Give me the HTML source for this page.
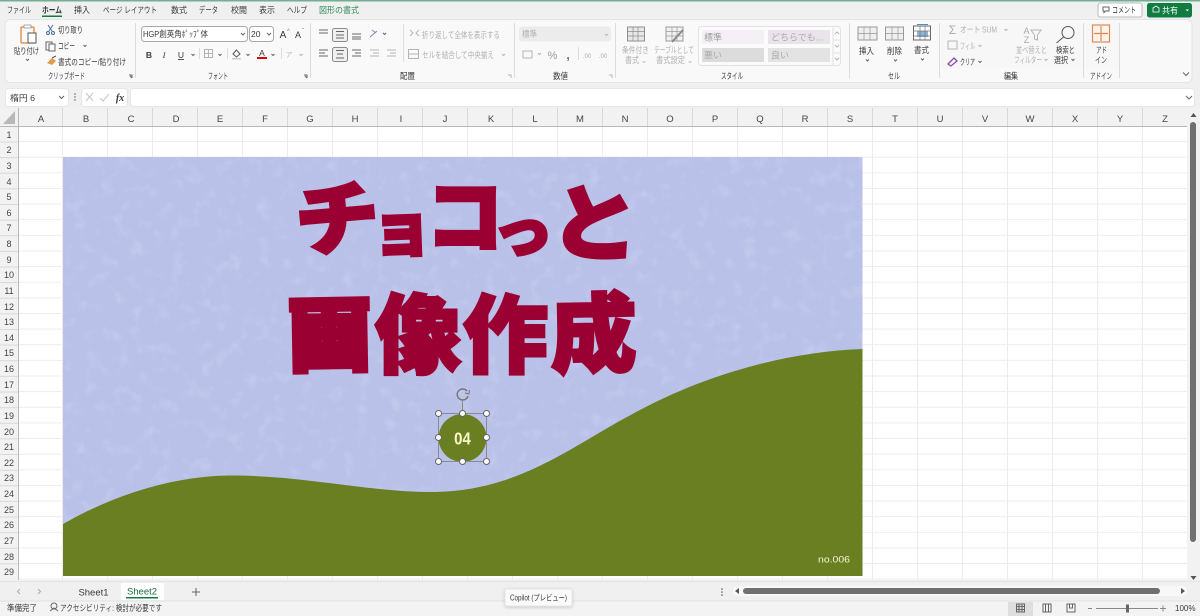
<!DOCTYPE html>
<html lang="ja"><head><meta charset="utf-8"><title>Excel</title>
<style>
html,body{margin:0;padding:0;width:1200px;height:616px;overflow:hidden;background:#f3f3f3}
svg{display:block;position:absolute;left:0;top:0}
text{font-family:"Liberation Sans","Noto Sans CJK JP",sans-serif;font-size:8.5px;fill:#3a3a3a}
.c{text-anchor:middle}
.g{fill:#b0b0b0}
.h text{font-size:9.5px;fill:#444;text-anchor:middle}
.r text{font-size:9px;fill:#444;text-anchor:middle}
.big text{font-family:"Noto Sans CJK JP",sans-serif;font-weight:900;fill:#9b0033;stroke:#9b0033;stroke-width:3px;stroke-linejoin:miter}
.ic{fill:none;stroke:#666;stroke-width:1}
.icg{fill:none;stroke:#b5b5b5;stroke-width:1}
</style></head><body>
<svg width="1200" height="616" viewBox="0 0 1200 616" xmlns="http://www.w3.org/2000/svg">
<defs>
<pattern id="grid" x="18" y="126.4" width="45" height="15.63" patternUnits="userSpaceOnUse">
<path d="M44.5 0V15.63M0 15.1H45" fill="none" stroke="#ececec" stroke-width="1"/>
</pattern>
<filter id="blot" x="0" y="0" width="100%" height="100%">
<feTurbulence type="fractalNoise" baseFrequency="0.07" numOctaves="3" seed="7"/>
<feColorMatrix type="matrix" values="0 0 0 0 0.80  0 0 0 0 0.80  0 0 0 0 0.94  0 0 0 2.2 -1.15"/>
</filter>
<filter id="sh" x="-20%" y="-40%" width="140%" height="190%"><feDropShadow dx="0" dy="1" stdDeviation="1.500" flood-color="#000" flood-opacity=".18"/></filter>
</defs>

<!-- chrome backgrounds -->
<rect width="1200" height="616" fill="#f0f0f0"/>
<rect width="1200" height="1.5" fill="#6fb093"/>
<rect x="5" y="19.5" width="1187" height="63" rx="5" fill="#f9f9f9" stroke="#e4e4e4"/>

<!-- tabs -->
<g>
<text x="7" y="13" textLength="24" lengthAdjust="spacingAndGlyphs">ファイル</text>
<text x="42" y="13" textLength="20" lengthAdjust="spacingAndGlyphs" style="font-weight:bold">ホーム</text>
<rect x="42" y="15.500" width="20" height="1.500" fill="#107c41"/>
<text x="74" y="13" textLength="16" lengthAdjust="spacingAndGlyphs">挿入</text>
<text x="103" y="13" textLength="54" lengthAdjust="spacingAndGlyphs">ページ レイアウト</text>
<text x="171" y="13" textLength="16" lengthAdjust="spacingAndGlyphs">数式</text>
<text x="199" y="13" textLength="19" lengthAdjust="spacingAndGlyphs">データ</text>
<text x="231" y="13" textLength="16" lengthAdjust="spacingAndGlyphs">校閲</text>
<text x="259" y="13" textLength="16" lengthAdjust="spacingAndGlyphs">表示</text>
<text x="287" y="13" textLength="20" lengthAdjust="spacingAndGlyphs">ヘルプ</text>
<text x="319" y="13" textLength="40" lengthAdjust="spacingAndGlyphs" style="fill:#2f8a5a">図形の書式</text>
</g>

<!-- share buttons -->
<rect x="1098" y="3" width="44" height="14" rx="2.500" fill="#fff" stroke="#bbb"/>
<path d="M1103 7h6v4h-3.500l-1.500 1.500V11h-1z" class="ic"/>
<text x="1112" y="13" textLength="24" lengthAdjust="spacingAndGlyphs">コメント</text>
<rect x="1147" y="3" width="45" height="14.500" rx="2.500" fill="#107c41"/>
<path d="M1153 8l3-2 3 2v4h-6z" fill="none" stroke="#fff" stroke-width=".8"/>
<text x="1162" y="13.500" textLength="16" lengthAdjust="spacingAndGlyphs" style="fill:#fff">共有</text>
<path d="M1185.500 9.500l1.800 1.800 1.800-1.800z" fill="#fff"/>

<!-- ribbon separators -->
<path d="M135.500 23V78M310.500 23V78M514.500 23V78M615.500 23V78M849.500 23V78M939.500 23V78M1083.500 23V78M1119.500 23V78" stroke="#dcdcdc"/>

<!-- clipboard -->
<rect x="21" y="27" width="13" height="16" rx="1" fill="none" stroke="#d9893a" stroke-width="1.300"/>
<rect x="24" y="25" width="7" height="3" fill="#fff" stroke="#888" stroke-width=".7"/>
<rect x="28" y="33" width="8" height="10" fill="#fff" stroke="#555"/>
<text x="14" y="54" textLength="25" lengthAdjust="spacingAndGlyphs">貼り付け</text>
<path d="M26 59l1.500 1.500 1.500-1.500" class="ic"/>
<path d="M48 25l4 6M53 25l-4 6" stroke="#4a6d9c" fill="none"/><circle cx="48" cy="33" r="1.500" fill="none" stroke="#4a6d9c"/><circle cx="53" cy="33" r="1.500" fill="none" stroke="#4a6d9c"/>
<text x="58" y="33" textLength="25" lengthAdjust="spacingAndGlyphs">切り取り</text>
<rect x="46" y="42" width="6" height="8" fill="none" stroke="#666"/><rect x="49" y="44" width="6" height="7" fill="#f9f9f9" stroke="#666"/>
<text x="58" y="49" textLength="17" lengthAdjust="spacingAndGlyphs">コピー</text>
<path d="M83.500 45l1.500 1.500 1.500-1.500" class="ic"/>
<path d="M47 63l5-5 4 3-4 4z" fill="#e29a4a"/><path d="M52 58l4-2" stroke="#555"/>
<text x="58" y="65" textLength="68" lengthAdjust="spacingAndGlyphs">書式のコピー/貼り付け</text>
<text x="48" y="79" textLength="37" lengthAdjust="spacingAndGlyphs">クリップボード</text>
<path d="M129 75h3v3M130 76l2 2" class="ic" stroke-width=".7"/>

<!-- font -->
<rect x="141.500" y="26.500" width="106" height="15" rx="3" fill="#fff" stroke="#a8a8a8"/>
<text x="143" y="37" textLength="65" lengthAdjust="spacingAndGlyphs">HGP創英角ﾎﾟｯﾌﾟ体</text>
<path d="M241 33l2 2 2-2" class="ic"/>
<rect x="249.500" y="26.500" width="24" height="15" rx="3" fill="#fff" stroke="#a8a8a8"/>
<text x="251" y="37" style="font-size:8.500px">20</text>
<path d="M267 33l2 2 2-2" class="ic"/>
<text x="283" y="38" class="c" style="font-size:10px">A</text><text x="287" y="33" style="font-size:6px;fill:#4a7ab5">^</text>
<text x="298" y="38" class="c" style="font-size:9px">A</text><text x="302" y="33" style="font-size:6px;fill:#4a7ab5">ˇ</text>
<text x="149" y="58" class="c" style="font-size:8.500px;font-weight:bold">B</text>
<text x="164" y="58" class="c" style="font-size:8.500px;font-style:italic;font-family:'Liberation Serif',serif">I</text>
<text x="181" y="58" class="c" style="font-size:8.500px;text-decoration:underline">U</text>
<path d="M191.500 54l1.500 1.500 1.500-1.500" class="ic"/>
<path d="M199.500 48v11M227.500 48v11M281.500 48v11" stroke="#ddd"/>
<rect x="204.500" y="49.500" width="8" height="8" class="icg"/><path d="M208.500 49.500v8M204.500 53.500h8" class="icg"/>
<path d="M218.500 54l1.500 1.500 1.500-1.500" class="ic"/>
<path d="M233 54l3.500-4 3.500 4-3.500 3z" fill="none" stroke="#555"/><rect x="232" y="58" width="9" height="1.500" fill="#ccc"/>
<path d="M246.500 54l1.500 1.500 1.500-1.500" class="ic"/>
<text x="262" y="56" class="c" style="font-size:8.500px">A</text><rect x="257" y="57" width="10" height="2" fill="#e00000"/>
<path d="M271.500 54l1.500 1.500 1.500-1.500" class="ic"/>
<text x="289" y="57" class="c" style="font-size:7px;fill:#bbb">ア</text>
<path d="M299.500 54l1.500 1.500 1.500-1.500" class="icg"/>
<text x="208" y="79" textLength="20" lengthAdjust="spacingAndGlyphs">フォント</text>
<path d="M304 75h3v3M305 76l2 2" class="ic" stroke-width=".7"/>

<!-- alignment -->
<path d="M319 30h9M319 33h9" class="ic"/>
<rect x="332.500" y="28.500" width="15" height="13" rx="2" fill="#f0f0f0" stroke="#8a8a8a"/>
<path d="M336 31.500h8M336 35h8M336 38h8" class="ic"/>
<path d="M352 34h9M352 37h9M352 39h9" class="ic"/>
<path d="M370 37l7-6M372 30l4 3" stroke="#7a8fc0" fill="none"/>
<path d="M383 33l1.500 1.500 1.500-1.500" class="ic"/>
<path d="M319 50h9M319 53h6M319 56h9" class="ic"/>
<rect x="332.500" y="47.500" width="15" height="14" rx="2" fill="#f0f0f0" stroke="#8a8a8a"/>
<path d="M336 50.500h8M337 54h6M336 58h8" class="ic"/>
<path d="M352 50h9M355 53h6M352 56h9" class="ic"/>
<path d="M403.500 24v38" stroke="#ddd"/>
<path d="M370 50h9M373 53h6M370 56h9M387 50h9M390 53h6M387 56h9" class="icg"/>
<text x="422" y="38" textLength="78" lengthAdjust="spacingAndGlyphs" class="g">折り返して全体を表示する</text>
<text x="422" y="58" textLength="72" lengthAdjust="spacingAndGlyphs" class="g">セルを結合して中央揃え</text>
<path d="M410 30l3 3-3 3M419 30l-3 3 3 3" class="icg"/>
<rect x="408.500" y="49.500" width="10" height="9" class="icg"/><path d="M408.500 54h10" class="icg"/>
<path d="M502 54l1.500 1.500 1.500-1.500" class="icg"/>
<text x="400" y="79" textLength="15" lengthAdjust="spacingAndGlyphs">配置</text>
<path d="M508 75h3v3" class="icg"/>

<!-- number -->
<rect x="519" y="26.500" width="92" height="15" rx="3" fill="#ececec"/>
<text x="522" y="37" textLength="15" lengthAdjust="spacingAndGlyphs" class="g">標準</text>
<path d="M605 34l1.500 1.500 1.500-1.500" class="icg"/>
<rect x="523" y="51" width="9" height="7" class="icg"/>
<path d="M538 53l1.500 1.500 1.500-1.500" class="icg"/>
<text x="552.500" y="59" class="c" style="font-size:11px;fill:#9a9a9a">%</text>
<text x="568" y="59" class="c" style="font-size:13px;fill:#777;font-weight:bold">,</text>
<path d="M578.500 47v13" stroke="#ddd"/>
<text x="587" y="58" class="c" style="font-size:6px;fill:#aaa">.00</text>
<text x="603" y="58" class="c" style="font-size:6px;fill:#aaa">.00</text>
<text x="553" y="79" textLength="15" lengthAdjust="spacingAndGlyphs">数値</text>
<path d="M609 75h3v3" class="icg"/>

<!-- style -->
<rect x="627.500" y="27" width="17" height="14" fill="#e8e8e8" stroke="#8f8f8f"/>
<path d="M628 31.500h16M628 36h16M633 27v14M638 27v14" stroke="#8f8f8f" fill="none" stroke-width=".7"/>
<rect x="666" y="27" width="17" height="14" fill="#f2f2f2" stroke="#9a9a9a"/>
<path d="M666 31.500h17M666 36h17M672 27v14M677 27v14" stroke="#9a9a9a" fill="none" stroke-width=".7"/>
<path d="M672 42l11-12" stroke="#888" stroke-width="2"/>
<text x="622" y="53" textLength="27" lengthAdjust="spacingAndGlyphs" class="g">条件付き</text>
<text x="625" y="63" textLength="22" lengthAdjust="spacingAndGlyphs" class="g">書式 ⌄</text>
<text x="654" y="53" textLength="40" lengthAdjust="spacingAndGlyphs" class="g">テーブルとして</text>
<text x="656" y="63" textLength="37" lengthAdjust="spacingAndGlyphs" class="g">書式設定 ⌄</text>
<rect x="698.500" y="26.500" width="142" height="39" rx="3" fill="#fbfbfb" stroke="#e2e2e2"/>
<rect x="702" y="30" width="62" height="14" fill="#f5f0f5"/>
<text x="704" y="40.500" style="font-size:9px;fill:#999">標準</text>
<rect x="768" y="30" width="62" height="14" fill="#e9e4ea"/>
<text x="771" y="40.500" style="font-size:9px;fill:#aaa">どちらでも...</text>
<rect x="702" y="48" width="62" height="14" fill="#dcdcdc"/>
<text x="704" y="58.500" style="font-size:9px;fill:#aaa">悪い</text>
<rect x="768" y="48" width="62" height="14" fill="#e3e3e3"/>
<text x="771" y="58.500" style="font-size:9px;fill:#aaa">良い</text>
<path d="M833 27.500v38M833 40h8M833 53h8" stroke="#e2e2e2" fill="none"/>
<path d="M835 34l2-2 2 2M835 45l2 2 2-2M835 58l2 2 2-2" class="icg"/>
<text x="721" y="79" textLength="22" lengthAdjust="spacingAndGlyphs">スタイル</text>

<!-- cells -->
<rect x="858" y="27" width="19" height="13" fill="#efefef" stroke="#999"/><path d="M858 33.500h19M864 27v13M870 27v13" stroke="#999" fill="none" stroke-width=".7"/>
<rect x="885.500" y="27" width="18" height="13" fill="#efefef" stroke="#999"/><path d="M886 33.500h17M892 27v13M898 27v13" stroke="#999" fill="none" stroke-width=".7"/>
<rect x="913.500" y="26" width="17" height="14" fill="#fff" stroke="#666"/><rect x="917" y="31" width="11" height="6" fill="#8fb3dc"/><path d="M914 31h17M914 36h17M920 26v14M925 26v14" stroke="#777" fill="none" stroke-width=".7"/><path d="M917 24.500h11" stroke="#4a8fd0"/>
<text x="859" y="54" textLength="15" lengthAdjust="spacingAndGlyphs">挿入</text><text x="887" y="54" textLength="15" lengthAdjust="spacingAndGlyphs">削除</text><text x="914" y="53" textLength="15" lengthAdjust="spacingAndGlyphs">書式</text>
<path d="M866 59.500l1.500 1.500 1.500-1.500M894 59.500l1.500 1.500 1.500-1.500M921 58.500l1.500 1.500 1.500-1.500" class="ic"/>
<text x="888" y="79" textLength="12" lengthAdjust="spacingAndGlyphs">セル</text>

<!-- edit -->
<rect x="941" y="22" width="140" height="46" fill="#f7f7f7"/>
<text x="952.500" y="34" class="c" style="font-size:12px;fill:#aaa">Σ</text>
<text x="960" y="32.500" textLength="37" lengthAdjust="spacingAndGlyphs" class="g">オート SUM</text>
<path d="M1004.500 29l1.500 1.500 1.500-1.500" class="icg"/>
<rect x="948" y="41" width="9" height="8" class="icg"/>
<text x="960" y="49" textLength="15" lengthAdjust="spacingAndGlyphs" class="g">フィル</text>
<path d="M978.500 45l1.500 1.500 1.500-1.500" class="icg"/>
<path d="M948 64l6-6 3 3-6 5z" fill="none" stroke="#8a4ab0" stroke-width="1.300"/>
<text x="960" y="65" textLength="15" lengthAdjust="spacingAndGlyphs">クリア</text>
<path d="M978.500 61l1.500 1.500 1.500-1.500" class="ic"/>
<text x="1026.500" y="34" class="c" style="font-size:9px;fill:#aaa">A</text>
<text x="1026.500" y="43" class="c" style="font-size:9px;fill:#aaa">Z</text>
<path d="M1031 30h10l-3.500 5v5l-3-1v-4z" class="icg"/>
<text x="1016" y="53" textLength="31" lengthAdjust="spacingAndGlyphs" class="g">並べ替えと</text>
<text x="1014" y="63" textLength="28" lengthAdjust="spacingAndGlyphs" class="g">フィルター</text>
<path d="M1044.500 59l1.500 1.500 1.500-1.500" class="icg"/>
<circle cx="1068" cy="32.500" r="6" fill="none" stroke="#555"/><path d="M1063.500 37l-7 6" stroke="#555"/>
<text x="1056" y="53" textLength="19" lengthAdjust="spacingAndGlyphs">検索と</text>
<text x="1054" y="63" textLength="14" lengthAdjust="spacingAndGlyphs">選択</text>
<path d="M1071.500 59l1.500 1.500 1.500-1.500" class="ic"/>
<text x="1004" y="79" textLength="14" lengthAdjust="spacingAndGlyphs">編集</text>

<!-- add-in -->
<rect x="1084" y="22" width="35" height="46" fill="#f7f7f7"/>
<rect x="1092.500" y="25" width="17" height="17" fill="#fdf3ea" stroke="#dd8a5a" stroke-width="1.200"/>
<path d="M1094 33.500h14M1101 26v15" stroke="#dd8a5a" stroke-width="1.200"/>
<text x="1096" y="53" textLength="11" lengthAdjust="spacingAndGlyphs">アド</text><text x="1095" y="63" textLength="12" lengthAdjust="spacingAndGlyphs">イン</text>
<text x="1090" y="79" textLength="22" lengthAdjust="spacingAndGlyphs">アドイン</text>
<path d="M1183 72.500l3 3 3-3" class="ic"/>

<!-- formula bar -->
<rect x="5.500" y="88.500" width="63" height="18" rx="3" fill="#fff" stroke="#e6e6e6"/>
<text x="10" y="101" textLength="25" lengthAdjust="spacingAndGlyphs">楕円 6</text>
<path d="M59 96l2.500 2.500 2.500-2.500" class="ic"/>
<circle cx="75" cy="94" r=".7" fill="#555"/><circle cx="75" cy="97" r=".7" fill="#555"/><circle cx="75" cy="100" r=".7" fill="#555"/>
<rect x="81.500" y="88.500" width="46" height="18" rx="3" fill="#fff" stroke="#e6e6e6"/>
<path d="M86 93l7 8M93 93l-7 8M100 98l3 3 6-7" fill="none" stroke="#c4c4c4"/>
<text x="120" y="101" class="c" style="font-family:'Liberation Serif',serif;font-style:italic;font-weight:bold;font-size:10px">fx</text>
<rect x="130.500" y="88.500" width="1064" height="18" rx="3" fill="#fff" stroke="#e6e6e6"/>
<path d="M1186 96l3 3 3-3" class="ic"/>

<!-- sheet grid -->
<rect x="18" y="126" width="1169" height="454" fill="#fff"/>
<rect x="18" y="126" width="1169" height="454" fill="url(#grid)"/>
<!-- headers -->
<rect x="0" y="108" width="1187" height="19" fill="#f2f2f2"/>
<rect x="0" y="126" width="18" height="454" fill="#f2f2f2"/>
<path d="M15 111v13H3z" fill="#b8b8b8"/>
<path d="M18.500 108V580M0 126.500H1187" stroke="#b8b8b8"/>
<path d="M62.500 108V126M107.500 108V126M152.500 108V126M197.500 108V126M242.500 108V126M287.500 108V126M332.500 108V126M377.500 108V126M422.500 108V126M467.500 108V126M512.500 108V126M557.500 108V126M602.500 108V126M647.500 108V126M692.500 108V126M737.500 108V126M782.500 108V126M827.500 108V126M872.500 108V126M917.500 108V126M962.500 108V126M1007.500 108V126M1052.500 108V126M1097.500 108V126M1142.500 108V126" stroke="#d8d8d8"/>
<path d="M0 142H18M0 157.600H18M0 173.200H18M0 188.900H18M0 204.500H18M0 220.100H18M0 235.700H18M0 251.400H18M0 267H18M0 282.600H18M0 298.300H18M0 313.900H18M0 329.500H18M0 345.100H18M0 360.800H18M0 376.400H18M0 392H18M0 407.700H18M0 423.300H18M0 438.900H18M0 454.500H18M0 470.200H18M0 485.800H18M0 501.400H18M0 517H18M0 532.700H18M0 548.300H18M0 563.900H18" stroke="#d8d8d8"/>
<g class="h">
<text x="41" y="122">A</text><text x="86" y="122">B</text><text x="131" y="122">C</text><text x="176" y="122">D</text><text x="220" y="122">E</text><text x="265" y="122">F</text><text x="310" y="122">G</text><text x="355" y="122">H</text><text x="401" y="122">I</text><text x="445" y="122">J</text><text x="491" y="122">K</text><text x="535" y="122">L</text><text x="580" y="122">M</text><text x="625" y="122">N</text><text x="670" y="122">O</text><text x="715" y="122">P</text><text x="760" y="122">Q</text><text x="805" y="122">R</text><text x="850" y="122">S</text><text x="895" y="122">T</text><text x="940" y="122">U</text><text x="985" y="122">V</text><text x="1030" y="122">W</text><text x="1075" y="122">X</text><text x="1120" y="122">Y</text><text x="1165" y="122">Z</text>
</g>
<g class="r">
<text x="9" y="138">1</text><text x="9" y="153">2</text><text x="9" y="169">3</text><text x="9" y="185">4</text><text x="9" y="200">5</text><text x="9" y="216">6</text><text x="9" y="231">7</text><text x="9" y="247">8</text><text x="9" y="263">9</text><text x="9" y="278">10</text><text x="9" y="294">11</text><text x="9" y="310">12</text><text x="9" y="325">13</text><text x="9" y="341">14</text><text x="9" y="356">15</text><text x="9" y="372">16</text><text x="9" y="388">17</text><text x="9" y="403">18</text><text x="9" y="419">19</text><text x="9" y="435">20</text><text x="9" y="450">21</text><text x="9" y="466">22</text><text x="9" y="481">23</text><text x="9" y="497">24</text><text x="9" y="513">25</text><text x="9" y="528">26</text><text x="9" y="544">27</text><text x="9" y="560">28</text><text x="9" y="575">29</text>
</g>

<!-- picture -->
<rect x="63" y="157" width="799.500" height="419" fill="#b9c1e9"/>
<rect x="63" y="157" width="799.500" height="419" filter="url(#blot)" opacity=".28"/>
<path d="M63 524C110 497 170 476 230 475.500C300 475 370 492 430 492C520 492 570 446 640 410C700 378 780 352 862.500 349V576H63Z" fill="#6a7f22"/>
<g class="big">
<text transform="translate(298,251) rotate(-5) scale(1.06,1)"><tspan style="font-size:79px">チ</tspan></text>
<text transform="translate(372,252) rotate(-2) scale(.98,1)"><tspan style="font-size:62px">ョ</tspan></text>
<text transform="translate(426,246) scale(1.02,1.06)"><tspan style="font-size:76px">コ</tspan></text>
<text transform="translate(494,254) rotate(-4) scale(1.04,.98)"><tspan style="font-size:58px">っ</tspan></text>
<text transform="translate(549,251) rotate(3) scale(1.08,1)"><tspan style="font-size:82px">と</tspan></text>
<text transform="translate(288,365) rotate(-1) scale(1.03,1)"><tspan style="font-size:82px;stroke-width:4px">画</tspan></text>
<text transform="translate(375,366)"><tspan style="font-size:86px">像</tspan></text>
<text transform="translate(463,366)"><tspan style="font-size:85px">作</tspan></text>
<text transform="translate(551,366) rotate(-1)"><tspan style="font-size:86px">成</tspan></text>
</g>
<text x="834" y="562.500" class="c" textLength="32" lengthAdjust="spacingAndGlyphs" style="font-size:9.500px;fill:#f4f4d8">no.006</text>

<!-- selected circle -->
<circle cx="462.500" cy="438" r="24" fill="#6a7f22"/>
<text transform="translate(462.500,444.500) scale(.88,1.05)" class="c" style="font-size:17px;font-weight:bold;fill:#fbf8c8">04</text>
<rect x="438.500" y="413.500" width="48" height="48" fill="none" stroke="#8a8a8a"/>
<path d="M462.500 401V413" stroke="#8a8a8a"/>
<path d="M467 391a5.500 5.500 0 1 0 1 5" fill="none" stroke="#777" stroke-width="1.500"/><path d="M465 393l4 1 .5-4" fill="none" stroke="#777"/>
<g fill="#fff" stroke="#666">
<circle cx="438.500" cy="413.500" r="3"/><circle cx="462.500" cy="413.500" r="3"/><circle cx="486.500" cy="413.500" r="3"/>
<circle cx="438.500" cy="437.500" r="3"/><circle cx="486.500" cy="437.500" r="3"/>
<circle cx="438.500" cy="461.500" r="3"/><circle cx="462.500" cy="461.500" r="3"/><circle cx="486.500" cy="461.500" r="3"/>
</g>

<!-- vertical scrollbar -->
<rect x="1187" y="108" width="13" height="472" fill="#f2f2f2"/>
<path d="M1193.500 113l-3 4h6z" fill="#555"/>
<rect x="1190" y="122" width="6" height="420" rx="3" fill="#707070"/>
<path d="M1193.500 580l-3-4h6z" fill="#555"/>

<!-- bottom tab strip -->
<rect x="0" y="581" width="1200" height="20" fill="#f0f0f0"/>
<path d="M0 581.500H1200" stroke="#e4e4e4"/>
<path d="M20 589l-2.500 2.500 2.500 2.500M38 589l2.500 2.500-2.500 2.500" fill="none" stroke="#aaa"/>
<text x="93.500" y="595.500" class="c" style="font-size:9.500px">Sheet1</text>
<rect x="121" y="583" width="43" height="17" fill="#fff"/>
<text x="142" y="594.500" class="c" style="font-size:9.500px;fill:#1c6b41">Sheet2</text>
<rect x="126" y="597" width="32" height="1.500" fill="#107c41"/>
<path d="M196 588v8M192 592h8" stroke="#666"/>
<circle cx="722" cy="589" r=".8" fill="#555"/><circle cx="722" cy="592" r=".8" fill="#555"/><circle cx="722" cy="595" r=".8" fill="#555"/>
<rect x="733" y="586" width="454" height="10" rx="5" fill="#f8f8f8"/>
<path d="M735 591l4-3v6zM1185 591l-4-3v6z" fill="#555"/>
<rect x="743" y="588" width="417" height="6" rx="3" fill="#707070"/>

<!-- status bar -->
<rect x="0" y="601" width="1200" height="15" fill="#f3f3f3"/>
<path d="M0 601H1200" stroke="#e2e2e2"/>
<text x="7" y="611" textLength="30" lengthAdjust="spacingAndGlyphs">準備完了</text>
<circle cx="54" cy="606" r="3" fill="none" stroke="#666"/><path d="M50 611l4-3 4 3" fill="none" stroke="#666"/>
<text x="60" y="611" textLength="102" lengthAdjust="spacingAndGlyphs">アクセシビリティ: 検討が必要です</text>
<rect x="1008" y="602" width="25" height="14" fill="#dedede"/>
<rect x="1016.500" y="604" width="8" height="8" class="ic"/><path d="M1016.500 606.500h8M1016.500 609.500h8M1019 604v8M1022 604v8" class="ic" stroke-width=".6"/>
<rect x="1043" y="604" width="8" height="8" class="ic"/><path d="M1045.500 604v8M1048.500 604v8" class="ic"/>
<path d="M1067 604h8v8h-8zM1069.500 604v4h3v-4" class="ic"/>
<path d="M1088 608.500h4M1096 608.500h62M1160 608.500h6M1163 605.500v6" stroke="#888" fill="none"/>
<rect x="1126" y="604.500" width="3" height="8" fill="#666"/>
<text x="1175" y="611" style="font-size:8px">100%</text>

<!-- copilot tooltip -->
<rect x="505" y="589" width="67" height="17" rx="2" fill="#fafafa" stroke="#e6e6e6" filter="url(#sh)"/>
<text x="510" y="600.500" textLength="57" lengthAdjust="spacingAndGlyphs" style="font-size:8px">Copilot (プレビュー)</text>
</svg>
</body></html>
